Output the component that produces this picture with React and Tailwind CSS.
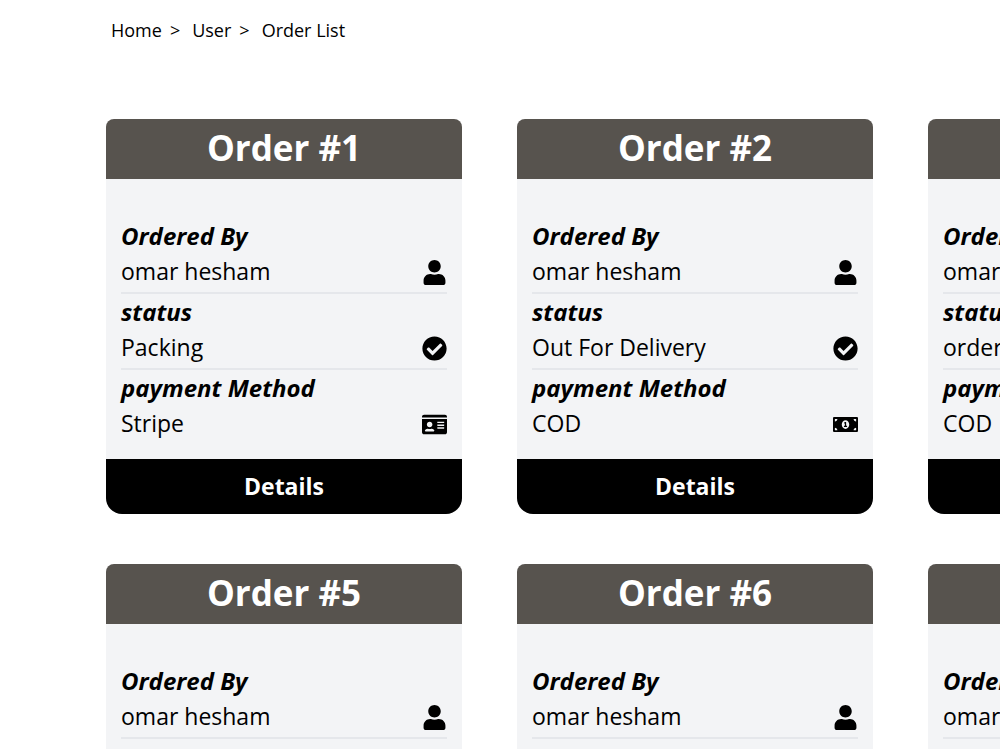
import React from 'react';
import { FaUser, FaCheckCircle, FaIdCard, FaMoneyBillAlt } from 'react-icons/fa';

const orders = [
  { id: 1, user: 'omar hesham', status: 'Packing', payment: 'Stripe' },
  { id: 2, user: 'omar hesham', status: 'Out For Delivery', payment: 'COD' },
  { id: 3, user: 'omar hesham', status: 'order placed', payment: 'COD' },
  { id: 4, user: 'omar hesham', status: 'order placed', payment: 'COD' },
  { id: 5, user: 'omar hesham', status: 'order placed', payment: 'COD' },
  { id: 6, user: 'omar hesham', status: 'order placed', payment: 'COD' },
  { id: 7, user: 'omar hesham', status: 'order placed', payment: 'COD' },
  { id: 8, user: 'omar hesham', status: 'order placed', payment: 'COD' },
];

export default function App() {
  return (
    <div className="h-screen overflow-hidden bg-white px-[106px] font-['Open_Sans','Noto_Sans',sans-serif] text-black">
      <Breadcrumb />
      <main className="mt-[75px] grid min-w-[1589px] grid-cols-4 gap-x-[55px] gap-y-[50px]">
        {orders.map(order => (
          <OrderCard key={order.id} order={order} />
        ))}
      </main>
    </div>
  );
}

function Breadcrumb() {
  return (
    <nav aria-label="Breadcrumb" className="flex gap-3 px-[5px] pt-4 text-lg leading-[28px]">
      <span className="flex gap-2"><a href="#home">Home</a> &gt;</span>
      <span className="flex gap-2"><a href="#user">User</a> &gt;</span>
      <a href="#orders" aria-current="page">Order List</a>
    </nav>
  );
}

function OrderCard({ order }) {
  return (
    <article className="flex flex-col overflow-hidden rounded-t-lg rounded-b-2xl bg-gray-100">
      <h2 className="bg-[#57534e] pb-0.5 text-center text-[35px] leading-[58px] font-bold text-white">
        Order #{order.id}
      </h2>
      <div className="px-[15px] pt-[39px] pb-[15px]">
        <OrderField label="Ordered By" value={order.user} icon={<FaUser size={25} />} />
        <OrderField label="status" value={order.status} icon={<FaCheckCircle size={25} />} />
        <OrderField
          label="payment Method"
          value={order.payment}
          icon={order.payment === 'Stripe' ? <FaIdCard size={25} /> : <FaMoneyBillAlt size={25} />}
        />
      </div>
      <button className="bg-black text-[23px] leading-[55px] font-bold text-white">Details</button>
    </article>
  );
}

function OrderField({ label, value, icon }) {
  return (
    <div className="border-b-2 border-gray-200 last:border-b-0">
      <h3 className="text-2xl leading-[36px] font-bold italic">{label}</h3>
      <div className="flex h-[38px] justify-between text-[23px] leading-[34px]">
        <span>{value}</span>
        <span className="flex h-9 items-center">{icon}</span>
      </div>
    </div>
  );
}
